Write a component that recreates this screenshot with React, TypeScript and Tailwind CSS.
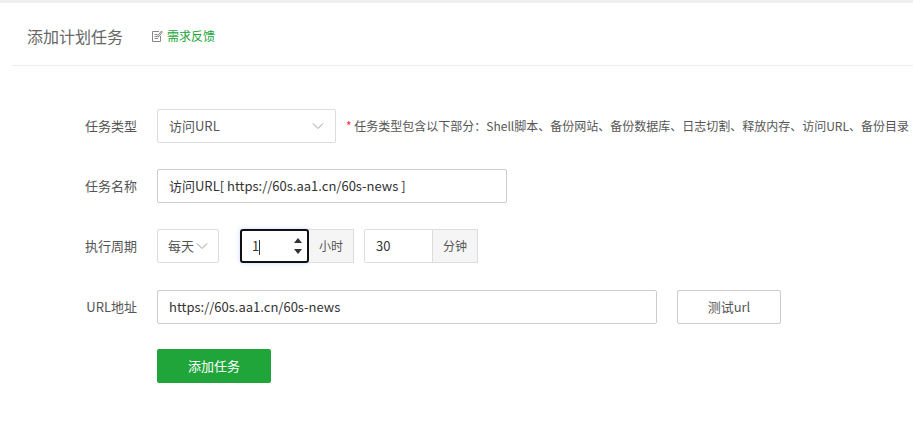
import React from 'react';

const font = { fontFamily: '"Noto Sans CJK SC", "Noto Sans", sans-serif' };

const Row: React.FC<{ label: string; children: React.ReactNode; className?: string }> = ({ label, children, className }) => (
  <div className={`flex items-center h-[34px] ${className || ''}`}>
    <div className="w-[137px] text-right text-[13px] text-[#555] pr-0">{label}</div>
    <div className="ml-[20px] flex items-center">{children}</div>
  </div>
);

const Chevron = () => (
  <svg width="12" height="8" viewBox="0 0 12 8" fill="none" stroke="#999" strokeWidth="1">
    <path d="M1 1.5 L6 6.5 L11 1.5" />
  </svg>
);

const App: React.FC = () => {
  return (
    <div className="w-[913px] h-[431px] bg-white overflow-hidden" style={font}>
      <div className="h-[3px] bg-[#efefef]" />
      {/* Header */}
      <div className="h-[63px] ml-[12px] border-b border-[#ececec] flex items-center pl-[15px] pt-[4px]">
        <span className="text-[16px] text-[#666]">添加计划任务</span>
        <span className="ml-[28px] flex items-center text-[12px] text-[#20a53a]">
          <svg width="12" height="13" viewBox="0 0 12 13" fill="none" stroke="#888" strokeWidth="1" className="mr-[4px]">
            <path d="M1.5 1.5 H8 M1.5 1.5 V11.5 H9.5 V6" />
            <path d="M3.5 4.5 H6.5 M3.5 6.5 H6 M3.5 8.5 H7" />
            <path d="M10.5 1 L7 5.5 L6.8 7 L8 6.5 L11.3 2 Z" />
          </svg>
          需求反馈
        </span>
      </div>

      <div className="pt-[43px]">
        <Row label="任务类型">
          <div className="w-[179px] h-[34px] border border-[#ddd] rounded-[2px] flex items-center justify-between px-[11px] text-[13px] text-[#555]">
            <span>访问URL</span>
            <Chevron />
          </div>
          <span className="ml-[10px] text-[12px] text-[#555] whitespace-nowrap">
            <span className="text-red-500">*</span> 任务类型包含以下部分：Shell脚本、备份网站、备份数据库、日志切割、释放内存、访问URL、备份目录
          </span>
        </Row>

        <Row label="任务名称" className="mt-[26px]">
          <div className="w-[350px] h-[34px] border border-[#ccc] rounded-[2px] flex items-center px-[11px] text-[13px] text-[#333]">
            访问URL[ https://60s.aa1.cn/60s-news ]
          </div>
        </Row>

        <Row label="执行周期" className="mt-[26px]">
          <div className="w-[62px] h-[34px] border border-[#ddd] rounded-[2px] flex items-center justify-between px-[10px] text-[13px] text-[#555]">
            <span>每天</span>
            <Chevron />
          </div>
          <div className="ml-[21px] flex">
            <div className="w-[69px] h-[34px] border-2 border-[#111] rounded-[3px] flex items-center justify-between pl-[10px] pr-[2px] text-[13px] text-[#333] shadow-[0_0_4px_rgba(100,150,255,0.4)]">
              <span>1<span className="inline-block w-px h-[15px] bg-[#333] align-middle" /></span>
              <div className="flex flex-col items-center justify-center gap-[6px] w-[14px]">
                <svg width="8" height="5" viewBox="0 0 8 5"><path d="M0 5 L4 0 L8 5 Z" fill="#333" /></svg>
                <svg width="8" height="5" viewBox="0 0 8 5"><path d="M0 0 L4 5 L8 0 Z" fill="#333" /></svg>
              </div>
            </div>
            <div className="w-[45px] h-[34px] border border-l-0 border-[#ddd] bg-[#f5f5f5] flex items-center justify-center text-[12px] text-[#555]">小时</div>
          </div>
          <div className="ml-[10px] flex">
            <div className="w-[69px] h-[34px] border border-[#ddd] rounded-l-[2px] flex items-center px-[11px] text-[13px] text-[#333]">30</div>
            <div className="w-[45px] h-[34px] border border-l-0 border-[#ddd] bg-[#f5f5f5] flex items-center justify-center text-[12px] text-[#555]">分钟</div>
          </div>
        </Row>

        <Row label="URL地址" className="mt-[27px]">
          <div className="w-[500px] h-[34px] border border-[#ccc] rounded-[2px] flex items-center px-[11px] text-[13px] text-[#333]">
            https://60s.aa1.cn/60s-news
          </div>
          <button className="ml-[20px] w-[104px] h-[34px] border border-[#ccc] rounded-[2px] bg-white text-[13px] text-[#555]">测试url</button>
        </Row>

        <div className="mt-[25px] ml-[157px]">
          <button className="w-[114px] h-[34px] bg-[#20a53a] rounded-[2px] text-white text-[13px]">添加任务</button>
        </div>
      </div>
    </div>
  );
};

export default App;
